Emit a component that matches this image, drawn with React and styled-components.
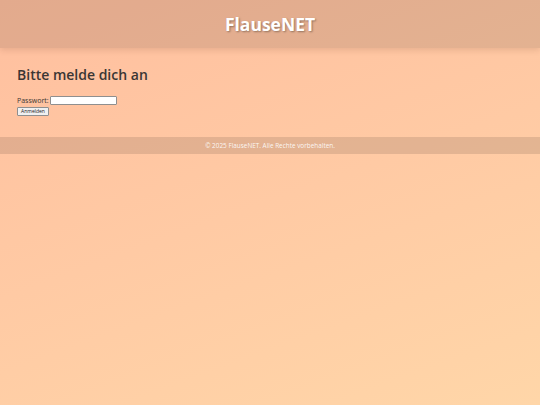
import React from "react";
import styled, { createGlobalStyle } from "styled-components";

const GlobalStyle = createGlobalStyle`
  html, body {
    margin: 0;
    padding: 0;
    min-height: 100%;
  }
  body {
    font-family: "Open Sans", "Liberation Sans", sans-serif;
    background: linear-gradient(160deg, #ffbf9f 0%, #ffcaa4 50%, #ffd6a8 100%);
    background-attachment: fixed;
    min-height: 405px;
    color: #333;
  }
`;

const Header = styled.header`
  height: 48px;
  display: flex;
  align-items: center;
  justify-content: center;
  background: rgba(0, 0, 0, 0.11);
  box-shadow: 0 2px 6px rgba(90, 50, 30, 0.15);
`;

const Title = styled.h1`
  margin: 0;
  font-size: 17.5px;
  font-weight: 700;
  color: #fff;
  text-shadow: 1px 1px 2px rgba(0, 0, 0, 0.35);
`;

const Main = styled.main`
  padding: 17px 17px 21px;
`;

const Heading = styled.h2`
  margin: 0 0 12px;
  font-size: 14px;
  font-weight: 600;
  color: #3b3634;
`;

const Form = styled.form`
  display: flex;
  flex-direction: column;
  align-items: flex-start;
  gap: 2px;
`;

const Row = styled.div`
  display: flex;
  align-items: center;
  gap: 1px;
`;

const Label = styled.label`
  font-size: 7px;
  color: #3b3634;
`;

const PasswordInput = styled.input`
  width: 63px;
  height: 7px;
  padding: 0 1px;
  border: 1px solid #8f8f8f;
  border-radius: 1px;
  background: #fff;
  font-size: 7px;
`;

const Button = styled.button`
  height: 9px;
  width: 32px;
  padding: 0;
  font-size: 5px;
  font-family: inherit;
  line-height: 1;
  white-space: nowrap;
  color: #222;
  background: #f0f0f0;
  border: 1px solid #8f8f8f;
  border-radius: 1px;
`;

const Footer = styled.footer`
  height: 17px;
  display: flex;
  align-items: center;
  justify-content: center;
  background: rgba(0, 0, 0, 0.11);
  font-size: 6.4px;
  color: rgba(255, 255, 255, 0.9);
`;

export default function App() {
  return (
    <>
      <GlobalStyle />
      <Header>
        <Title>FlauseNET</Title>
      </Header>
      <Main>
        <Heading>Bitte melde dich an</Heading>
        <Form onSubmit={(e) => e.preventDefault()}>
          <Row>
            <Label htmlFor="pw">Passwort:</Label>
            <PasswordInput id="pw" type="password" />
          </Row>
          <Button type="submit">Anmelden</Button>
        </Form>
      </Main>
      <Footer>© 2025 FlauseNET. Alle Rechte vorbehalten.</Footer>
    </>
  );
}
